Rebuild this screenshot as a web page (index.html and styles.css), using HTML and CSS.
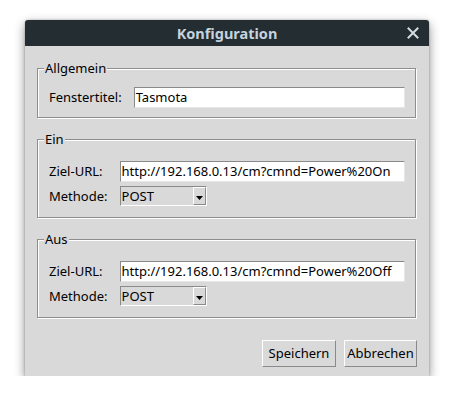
FILE: index.html
```html
<!DOCTYPE html>
<html>
<head>
<meta charset="utf-8">
<link rel="stylesheet" href="styles.css">
</head>
<body>
<div class="window">
  <div class="titlebar">
    <span class="title">Konfiguration</span>
    <svg class="close" width="12" height="12" viewBox="0 0 12 12"><path d="M1.5 1.5 L10.5 10.5 M10.5 1.5 L1.5 10.5" stroke="#d3dce1" stroke-width="2" stroke-linecap="square" fill="none"/></svg>
  </div>
  <div class="content">
    <fieldset class="group">
      <legend>Allgemein</legend>
      <div class="form form-general">
        <span class="label">Fenstertitel:</span>
        <div class="entry">Tasmota</div>
      </div>
    </fieldset>
    <fieldset class="group">
      <legend>Ein</legend>
      <div class="form form-request">
        <span class="label">Ziel-URL:</span>
        <div class="entry">http://192.168.0.13/cm?cmnd=Power%20On</div>
        <span class="label">Methode:</span>
        <div class="combo"><span class="combo-text">POST</span><span class="arrow"><svg width="7" height="5" viewBox="0 0 7 5"><path d="M0 0 H7 L3.5 4 Z" fill="#000"/></svg></span></div>
      </div>
    </fieldset>
    <fieldset class="group">
      <legend>Aus</legend>
      <div class="form form-request">
        <span class="label">Ziel-URL:</span>
        <div class="entry">http://192.168.0.13/cm?cmnd=Power%20Off</div>
        <span class="label">Methode:</span>
        <div class="combo"><span class="combo-text">POST</span><span class="arrow"><svg width="7" height="5" viewBox="0 0 7 5"><path d="M0 0 H7 L3.5 4 Z" fill="#000"/></svg></span></div>
      </div>
    </fieldset>
    <div class="buttons">
      <div class="btn btn-save">Speichern</div>
      <div class="btn btn-cancel">Abbrechen</div>
    </div>
  </div>
</div>
</body>
</html>
```

FILE: styles.css
```css
html, body {
  margin: 0;
  padding: 0;
  background: #ffffff;
}
body {
  padding: 20px 0 0 25px;
  font-family: "Noto Sans", "DejaVu Sans", sans-serif;
  font-size: 13px;
  color: #000;
}
.window {
  width: 404px;
  height: 356px;
  background: #d9d9d9;
  border-radius: 3px 3px 0 0;
  box-shadow: 0 4px 11px rgba(0,0,0,0.45), 0 0 2px rgba(0,0,0,0.3);
  display: flex;
  flex-direction: column;
}
.titlebar {
  height: 26px;
  background: #232d32;
  border-radius: 3px 3px 0 0;
  display: grid;
  grid-template-columns: 1fr auto 1fr;
  align-items: center;
}
.title {
  grid-column: 2;
  color: #c4d3de;
  font-weight: bold;
  font-size: 14.5px;
  line-height: 26px;
}
.close {
  grid-column: 3;
  justify-self: end;
  margin-right: 10px;
}
.content {
  padding: 14px 13px 0 12px;
  display: flex;
  flex-direction: column;
}
.group {
  margin: 0 0 13px 0;
  padding: 0;
  border: 1px solid #8e8e8e;
  box-shadow: inset 1px 1px 0 #fff, 1px 1px 0 #fff;
  min-width: 0;
}
.group legend {
  margin-left: 6px;
  padding: 0 1px;
  line-height: 16px;
  background: #d9d9d9;
  position: relative;
}
.form {
  display: grid;
  grid-template-columns: auto 1fr;
  column-gap: 12px;
  row-gap: 4px;
  align-items: center;
  padding: 11px 10px 9px 11px;
}
.form-request {
  padding-top: 14px;
  padding-bottom: 11px;
}
.label {
  line-height: 19px;
}
.entry {
  height: 19px;
  line-height: 19px;
  background: #fff;
  border-top: 1px solid #8a8a8a;
  border-left: 1px solid #8a8a8a;
  border-right: 1px solid #e6e6e6;
  border-bottom: 1px solid #e6e6e6;
  padding-left: 1px;
  white-space: nowrap;
  overflow: hidden;
}
.combo {
  width: 85px;
  height: 18px;
  border-top: 1px solid #8a8a8a;
  border-left: 1px solid #8a8a8a;
  border-right: 1px solid #fff;
  border-bottom: 1px solid #fff;
  display: flex;
  align-items: stretch;
  justify-content: space-between;
}
.combo-text {
  line-height: 18px;
  padding-left: 1px;
}
.arrow {
  width: 11px;
  border-top: 1px solid #fff;
  border-left: 1px solid #fff;
  border-right: 1px solid #8a8a8a;
  border-bottom: 1px solid #8a8a8a;
  display: flex;
  align-items: flex-end;
  justify-content: center;
  padding-bottom: 3px;
}
.buttons {
  display: flex;
  justify-content: flex-end;
  gap: 8px;
  margin-top: 9px;
  margin-right: -1px;
}
.btn {
  height: 25px;
  line-height: 25px;
  border-top: 1px solid #fff;
  border-left: 1px solid #fff;
  border-right: 1px solid #8a8a8a;
  border-bottom: 1px solid #8a8a8a;
  text-align: center;
}
.btn-save { width: 72px; }
.btn-cancel { width: 71px; }
```
